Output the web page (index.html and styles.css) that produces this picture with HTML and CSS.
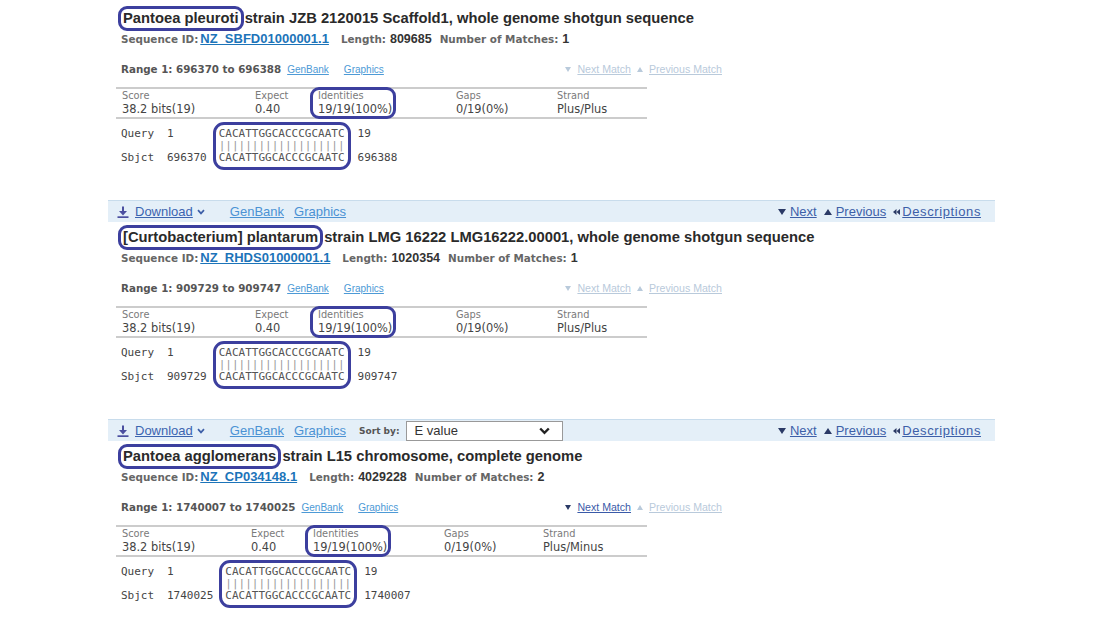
FILE: index.html
```html
<!DOCTYPE html>
<html lang="en">
<head>
<meta charset="utf-8">
<title>BLAST alignments</title>
<link rel="stylesheet" href="styles.css">
</head>
<body>
<div class="page">

  <section class="hit">
    <h2 class="title"><span class="mark">Pantoea pleuroti</span> strain JZB 2120015 Scaffold1, whole genome shotgun sequence</h2>
    <div class="seqid"><span class="lbl">Sequence ID:</span><a class="acc" href="#">NZ_SBFD01000001.1</a><span class="lbl">Length:</span><span class="val">809685</span><span class="lbl">Number of Matches:</span><span class="val">1</span></div>
    <div class="range">
      <div class="range-l"><span class="rlabel">Range 1: 696370 to 696388</span><a class="rlink" href="#">GenBank</a><a class="rlink" href="#">Graphics</a></div>
      <div class="mnav">
        <svg class="tri" width="6" height="5" viewBox="0 0 6 5"><polygon points="0,0 6,0 3,5" fill="currentColor"/></svg><span class="ml off">Next Match</span>
        <svg class="tri" width="6" height="5" viewBox="0 0 6 5"><polygon points="0,5 6,5 3,0" fill="currentColor"/></svg><span class="ml off">Previous Match</span>
      </div>
    </div>
    <div class="stats">
      <div class="col w1"><div class="h">Score</div><div class="v">38.2 bits(19)</div></div>
      <div class="col w2"><div class="h">Expect</div><div class="v">0.40</div></div>
      <div class="col w3"><div class="hl"><div class="h">Identities</div><div class="v">19/19(100%)</div></div></div>
      <div class="col w4"><div class="h">Gaps</div><div class="v">0/19(0%)</div></div>
      <div class="col"><div class="h">Strand</div><div class="v">Plus/Plus</div></div>
    </div>
    <div class="aln">
      <div class="lab"><div>Query</div><div></div><div>Sbjct</div></div>
      <div class="st"><div>1</div><div></div><div>696370</div></div>
      <div class="seq"><div>CACATTGGCACCCGCAATC</div><div class="bars">|||||||||||||||||||</div><div>CACATTGGCACCCGCAATC</div></div>
      <div class="en"><div>19</div><div></div><div>696388</div></div>
    </div>
  </section>

  <div class="toolbar">
    <a class="dl" href="#">
      <svg class="dlicon" width="12" height="12" viewBox="0 0 12 12"><rect x="5" y="0.5" width="2" height="6" fill="#4b4fa0"/><polygon points="2,5 10,5 6,9.5" fill="#4b4fa0"/><rect x="0.5" y="10.3" width="11" height="1.7" fill="#4b4fa0"/></svg>
      <span class="u">Download</span>
      <svg class="chev" width="8" height="6" viewBox="0 0 8 6"><polyline points="1,1.2 4,4.4 7,1.2" fill="none" stroke="#3d5fa8" stroke-width="1.7"/></svg>
    </a>
    <a class="tlink first" href="#">GenBank</a>
    <a class="tlink" href="#">Graphics</a>
    <div class="tnav">
      <svg width="8" height="6" viewBox="0 0 8 6"><polygon points="0,0 8,0 4,6" fill="#2b3a66"/></svg><a href="#">Next</a>
      <svg class="gap" width="8" height="6" viewBox="0 0 8 6"><polygon points="0,6 8,6 4,0" fill="#2b3a66"/></svg><a href="#">Previous</a>
      <svg class="gap" width="7" height="6" viewBox="0 0 7 6"><polygon points="3.5,0 0,3 3.5,6" fill="#2b3a66"/><polygon points="7,0 3.5,3 7,6" fill="#2b3a66"/></svg><a class="desc" href="#">Descriptions</a>
    </div>
  </div>

  <section class="hit">
    <h2 class="title"><span class="mark">[Curtobacterium] plantarum</span> strain LMG 16222 LMG16222.00001, whole genome shotgun sequence</h2>
    <div class="seqid"><span class="lbl">Sequence ID:</span><a class="acc" href="#">NZ_RHDS01000001.1</a><span class="lbl">Length:</span><span class="val">1020354</span><span class="lbl">Number of Matches:</span><span class="val">1</span></div>
    <div class="range">
      <div class="range-l"><span class="rlabel">Range 1: 909729 to 909747</span><a class="rlink" href="#">GenBank</a><a class="rlink" href="#">Graphics</a></div>
      <div class="mnav">
        <svg class="tri" width="6" height="5" viewBox="0 0 6 5"><polygon points="0,0 6,0 3,5" fill="currentColor"/></svg><span class="ml off">Next Match</span>
        <svg class="tri" width="6" height="5" viewBox="0 0 6 5"><polygon points="0,5 6,5 3,0" fill="currentColor"/></svg><span class="ml off">Previous Match</span>
      </div>
    </div>
    <div class="stats">
      <div class="col w1"><div class="h">Score</div><div class="v">38.2 bits(19)</div></div>
      <div class="col w2"><div class="h">Expect</div><div class="v">0.40</div></div>
      <div class="col w3"><div class="hl"><div class="h">Identities</div><div class="v">19/19(100%)</div></div></div>
      <div class="col w4"><div class="h">Gaps</div><div class="v">0/19(0%)</div></div>
      <div class="col"><div class="h">Strand</div><div class="v">Plus/Plus</div></div>
    </div>
    <div class="aln">
      <div class="lab"><div>Query</div><div></div><div>Sbjct</div></div>
      <div class="st"><div>1</div><div></div><div>909729</div></div>
      <div class="seq"><div>CACATTGGCACCCGCAATC</div><div class="bars">|||||||||||||||||||</div><div>CACATTGGCACCCGCAATC</div></div>
      <div class="en"><div>19</div><div></div><div>909747</div></div>
    </div>
  </section>

  <div class="toolbar">
    <a class="dl" href="#">
      <svg class="dlicon" width="12" height="12" viewBox="0 0 12 12"><rect x="5" y="0.5" width="2" height="6" fill="#4b4fa0"/><polygon points="2,5 10,5 6,9.5" fill="#4b4fa0"/><rect x="0.5" y="10.3" width="11" height="1.7" fill="#4b4fa0"/></svg>
      <span class="u">Download</span>
      <svg class="chev" width="8" height="6" viewBox="0 0 8 6"><polyline points="1,1.2 4,4.4 7,1.2" fill="none" stroke="#3d5fa8" stroke-width="1.7"/></svg>
    </a>
    <a class="tlink first" href="#">GenBank</a>
    <a class="tlink" href="#">Graphics</a>
    <span class="sort">Sort by:</span>
    <div class="select"><span>E value</span><svg width="11" height="8" viewBox="0 0 11 8"><polyline points="1.2,1.5 5.5,5.8 9.8,1.5" fill="none" stroke="#222" stroke-width="2.4"/></svg></div>
    <div class="tnav">
      <svg width="8" height="6" viewBox="0 0 8 6"><polygon points="0,0 8,0 4,6" fill="#2b3a66"/></svg><a href="#">Next</a>
      <svg class="gap" width="8" height="6" viewBox="0 0 8 6"><polygon points="0,6 8,6 4,0" fill="#2b3a66"/></svg><a href="#">Previous</a>
      <svg class="gap" width="7" height="6" viewBox="0 0 7 6"><polygon points="3.5,0 0,3 3.5,6" fill="#2b3a66"/><polygon points="7,0 3.5,3 7,6" fill="#2b3a66"/></svg><a class="desc" href="#">Descriptions</a>
    </div>
  </div>

  <section class="hit">
    <h2 class="title"><span class="mark">Pantoea agglomerans</span> strain L15 chromosome, complete genome</h2>
    <div class="seqid"><span class="lbl">Sequence ID:</span><a class="acc" href="#">NZ_CP034148.1</a><span class="lbl">Length:</span><span class="val">4029228</span><span class="lbl">Number of Matches:</span><span class="val">2</span></div>
    <div class="range">
      <div class="range-l"><span class="rlabel">Range 1: 1740007 to 1740025</span><a class="rlink" href="#">GenBank</a><a class="rlink" href="#">Graphics</a></div>
      <div class="mnav">
        <svg class="tri on" width="6" height="5" viewBox="0 0 6 5"><polygon points="0,0 6,0 3,5" fill="currentColor"/></svg><a class="ml act" href="#">Next Match</a>
        <svg class="tri" width="6" height="5" viewBox="0 0 6 5"><polygon points="0,5 6,5 3,0" fill="currentColor"/></svg><span class="ml off">Previous Match</span>
      </div>
    </div>
    <div class="stats alt">
      <div class="col w1"><div class="h">Score</div><div class="v">38.2 bits(19)</div></div>
      <div class="col w2"><div class="h">Expect</div><div class="v">0.40</div></div>
      <div class="col w3"><div class="hl"><div class="h">Identities</div><div class="v">19/19(100%)</div></div></div>
      <div class="col w4"><div class="h">Gaps</div><div class="v">0/19(0%)</div></div>
      <div class="col"><div class="h">Strand</div><div class="v">Plus/Minus</div></div>
    </div>
    <div class="aln">
      <div class="lab"><div>Query</div><div></div><div>Sbjct</div></div>
      <div class="st"><div>1</div><div></div><div>1740025</div></div>
      <div class="seq"><div>CACATTGGCACCCGCAATC</div><div class="bars">|||||||||||||||||||</div><div>CACATTGGCACCCGCAATC</div></div>
      <div class="en"><div>19</div><div></div><div>1740007</div></div>
    </div>
  </section>

</div>
</body>
</html>
```

FILE: styles.css
```css
body {
  margin: 0;
  background: #ffffff;
  font-family: "Liberation Sans", Arial, sans-serif;
  color: #333333;
}

a {
  text-decoration: underline;
}

.page {
  width: 887px;
  margin-left: 108px;
  padding-top: 3px;
}

.hit {
  padding-left: 13px;
  padding-bottom: 36px;
}

.title {
  margin: 5px 0 0;
  height: 20px;
  font-size: 14.75px;
  line-height: 20px;
  font-weight: bold;
  color: #2a2a2a;
  white-space: nowrap;
}

.mark {
  outline: 3px solid #3c3f9e;
  border-radius: 6px;
  padding: 1px 2px 2px 2px;
}

.seqid {
  display: flex;
  align-items: baseline;
  margin-top: 3px;
  height: 16px;
  line-height: 16px;
  white-space: nowrap;
}

.lbl {
  font-family: "DejaVu Sans", Verdana, sans-serif;
  font-weight: bold;
  font-size: 10.4px;
  color: #666666;
}

.acc {
  font-weight: bold;
  font-size: 13px;
  color: #1c74b9;
  margin-left: 2px;
  margin-right: 12px;
}

.val {
  font-weight: bold;
  font-size: 12.5px;
  color: #333333;
  margin-left: 4px;
  margin-right: 8px;
}

.range {
  display: flex;
  justify-content: space-between;
  align-items: center;
  width: 601px;
  height: 16px;
  margin-top: 14px;
  white-space: nowrap;
}

.range-l {
  display: flex;
  align-items: baseline;
  line-height: 16px;
}

.rlabel {
  font-family: "DejaVu Sans", Verdana, sans-serif;
  font-weight: bold;
  font-size: 10.3px;
  color: #555555;
  margin-right: 6px;
}

.rlink {
  font-size: 10px;
  color: #4d9ad6;
  margin-right: 15px;
}

.mnav {
  display: flex;
  align-items: center;
  font-size: 10.6px;
  line-height: 16px;
  color: #b9cadb;
}

.mnav .tri {
  margin-right: 6px;
}

.mnav .tri.on {
  color: #2b3a66;
}

.mnav .ml {
  margin-right: 6px;
  text-decoration: underline;
}

.mnav .ml:last-child {
  margin-right: 0;
}

.mnav .off {
  color: #b9cadb;
}

.mnav .act {
  color: #3a5aa8;
}

.stats {
  display: flex;
  width: 531px;
  box-sizing: border-box;
  margin: 10px 0 0 -5px;
  padding: 1px 0 1px 6px;
  border-top: 2px solid #cccccc;
  border-bottom: 2px solid #cccccc;
  font-family: "DejaVu Sans", Verdana, sans-serif;
  white-space: nowrap;
}

.col .h {
  height: 12px;
  font-size: 9.8px;
  line-height: 12px;
  color: #7a7a7a;
}

.col .v {
  height: 14px;
  font-size: 11.4px;
  line-height: 14px;
  color: #444444;
}

.w1 { width: 133px; }
.w2 { width: 63px; }
.w3 { width: 138px; }
.w4 { width: 101px; }

.stats.alt .w1 { width: 129px; }
.stats.alt .w2 { width: 62px; }
.stats.alt .w3 { width: 131px; }
.stats.alt .w4 { width: 99px; }

.hl {
  width: fit-content;
  margin-left: -5px;
  padding: 0 1px 0 5px;
  outline: 3px solid #3c3f9e;
  border-radius: 6px;
}

.aln {
  display: flex;
  margin-top: 9px;
  font-family: "DejaVu Sans Mono", "Liberation Mono", monospace;
  font-size: 11px;
  line-height: 12px;
  color: #444444;
  white-space: pre;
}

.aln div div {
  height: 12px;
}

.aln .lab {
  width: 46px;
}

.aln .st {
  margin-right: 12px;
}

.aln .seq {
  color: #555555;
  outline: 3px solid #3c3f9e;
  outline-offset: 3px;
  border-radius: 5px;
}

.aln .bars {
  color: #999999;
}

.aln .en {
  margin-left: 13px;
}

.toolbar {
  display: flex;
  align-items: center;
  height: 22px;
  box-sizing: border-box;
  border-top: 1px solid #c8dcec;
  background: #e4eff8;
  padding: 0 14px 0 9px;
  font-size: 13px;
  line-height: 16px;
  white-space: nowrap;
}

.dl {
  display: flex;
  align-items: center;
  color: #3b64b0;
}

.dl .dlicon {
  margin-right: 6px;
}

.dl .chev {
  margin-left: 4px;
}

.tlink {
  color: #4b92d4;
  margin-left: 10px;
}

.tlink.first {
  margin-left: 25px;
}

.sort {
  margin-left: 13px;
  font-family: "DejaVu Sans", Verdana, sans-serif;
  font-weight: bold;
  font-size: 9px;
  color: #555555;
}

.select {
  margin-left: 6px;
  width: 157px;
  height: 20px;
  box-sizing: border-box;
  border: 1px solid #999999;
  background: #ffffff;
  display: flex;
  align-items: center;
  justify-content: space-between;
  padding: 0 12px 0 8px;
  font-size: 13px;
  color: #333333;
}

.tnav {
  margin-left: auto;
  display: flex;
  align-items: center;
}

.tnav a {
  color: #3d5fa8;
  margin-left: 4px;
}

.tnav .gap {
  margin-left: 7px;
}

.tnav .desc {
  margin-left: 2px;
  letter-spacing: 0.6px;
}
```
